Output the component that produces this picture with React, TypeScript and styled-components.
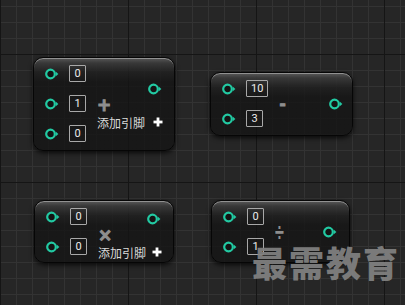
import styled, { createGlobalStyle } from 'styled-components';

const GlobalStyle = createGlobalStyle`
	html, body {
		margin: 0;
		padding: 0;
		background: #262626;
	}
`;

const Canvas = styled.div`
	position: relative;
	width: 405px;
	height: 305px;
	overflow: hidden;
	background-color: #262626;
	background-image:
		linear-gradient(to right, #151515 1px, transparent 1px),
		linear-gradient(to bottom, #151515 1px, transparent 1px),
		linear-gradient(to right, #333333 1px, transparent 1px),
		linear-gradient(to bottom, #333333 1px, transparent 1px);
	background-size: 128px 128px, 128px 128px, 16px 16px, 16px 16px;
	background-position: 0 54px, 0 54px, 0 6px, 0 6px;
	font-family: Roboto, 'Noto Sans CJK SC', sans-serif;
`;

const Node = styled.div<{ $x: number; $y: number; $w: number; $h: number }>`
	position: absolute;
	left: ${p => p.$x}px;
	top: ${p => p.$y}px;
	width: ${p => p.$w}px;
	height: ${p => p.$h}px;
	box-sizing: border-box;
	display: flex;
	border: 1px solid #060606;
	border-radius: 10px;
	background: linear-gradient(
		180deg,
		rgba(92, 92, 92, 0.95) 0px,
		rgba(58, 58, 58, 0.9) 5px,
		rgba(32, 32, 32, 0.85) 14px,
		rgba(20, 20, 20, 0.78) 24px,
		rgba(20, 20, 20, 0.78) 100%
	);
	box-shadow:
		0 2px 5px rgba(0, 0, 0, 0.75),
		inset 0 1px 0 rgba(255, 255, 255, 0.35);
`;

const Inputs = styled.div`
	display: flex;
	flex-direction: column;
	gap: 13px;
	padding: 7px 0 0 11px;
`;

const PinRow = styled.div`
	display: flex;
	align-items: center;
	gap: 10px;
	height: 17px;
`;

const ValueBox = styled.div`
	box-sizing: border-box;
	min-width: 17px;
	height: 17px;
	padding: 0 4px;
	border: 1px solid #a8a8a8;
	border-radius: 1px;
	color: #ececec;
	font-size: 11px;
	line-height: 15px;
	text-align: center;
`;

const Body = styled.div<{ $compact?: boolean; $top: number; $right: number }>`
	flex: 1;
	display: flex;
	flex-direction: ${p => (p.$compact ? 'row' : 'column')};
	align-items: ${p => (p.$compact ? 'center' : 'stretch')};
	justify-content: ${p => (p.$compact ? 'space-between' : 'flex-start')};
	padding: ${p => p.$top}px ${p => p.$right}px 0 11px;
`;

const OutPin = styled.div<{ $compact?: boolean }>`
	align-self: ${p => (p.$compact ? 'center' : 'flex-end')};
	display: flex;
	height: 12px;
	margin-right: 1px;
`;

const Op = styled.span<{ $size: number; $compact?: boolean; $narrow?: boolean }>`
	display: block;
	height: 12px;
	margin-top: ${p => (p.$compact ? 0 : 4)}px;
	color: #8e8e8e;
	font-family: ${p => (p.$narrow ? "'Liberation Sans'" : "'DejaVu Sans'")}, sans-serif;
	font-weight: bold;
	font-size: ${p => p.$size}px;
	line-height: 12px;
	-webkit-text-stroke: ${p => (p.$narrow ? 0 : 1)}px #8e8e8e;
	transform: ${p => (p.$narrow ? 'scaleX(0.62)' : 'none')};
	transform-origin: left center;
`;

const AddPin = styled.div`
	display: flex;
	align-items: center;
	justify-content: space-between;
	height: 12px;
	margin-top: 5px;
	color: #dadada;
	font-size: 12px;
	font-family: 'Noto Sans CJK SC', sans-serif;
`;

const Watermark = styled.div`
	position: absolute;
	left: 252px;
	top: 244px;
	color: rgba(128, 128, 128, 0.95);
	font-family: 'Noto Sans CJK SC', sans-serif;
	font-weight: 900;
	font-size: 35px;
	line-height: 1;
	letter-spacing: 2px;
	white-space: nowrap;
`;

const Pin = () => (
	<svg width='14' height='12' viewBox='0 0 14 12'>
		<circle cx='5.5' cy='6' r='4.3' fill='#141414' stroke='#22c9a2' strokeWidth='2.2' />
		<polygon points='10.6,3.6 13.4,6 10.6,8.4' fill='#22c9a2' />
	</svg>
);

const PlusIcon = () => (
	<svg width='10' height='10' viewBox='0 0 10 10'>
		<rect x='3.6' y='0.5' width='2.8' height='9' fill='#ffffff' />
		<rect x='0.5' y='3.6' width='9' height='2.8' fill='#ffffff' />
	</svg>
);

type MathNode = {
	x: number;
	y: number;
	w: number;
	h: number;
	values: string[];
	op: string;
	opSize: number;
	narrow?: boolean;
	addPin?: boolean;
	top: number;
	right: number;
};

const nodes: MathNode[] = [
	{ x: 33, y: 57, w: 142, h: 94, values: ['0', '1', '0'], op: '+', opSize: 17, addPin: true, top: 25, right: 11 },
	{ x: 210, y: 72, w: 143, h: 64, values: ['10', '3'], op: '-', opSize: 15, top: 0, right: 8 },
	{ x: 34, y: 200, w: 140, h: 63, values: ['0', '0'], op: '×', opSize: 17, addPin: true, top: 12, right: 11 },
	{ x: 211, y: 200, w: 139, h: 63, values: ['0', '1'], op: '÷', opSize: 26, narrow: true, top: 0, right: 11 },
];

const App = () => (
	<>
		<GlobalStyle />
		<Canvas>
			{nodes.map(node => (
				<Node key={node.x + '-' + node.y} $x={node.x} $y={node.y} $w={node.w} $h={node.h}>
					<Inputs>
						{node.values.map((value, i) => (
							<PinRow key={i}>
								<Pin />
								<ValueBox>{value}</ValueBox>
							</PinRow>
						))}
					</Inputs>
					{node.addPin ? (
						<Body $top={node.top} $right={node.right}>
							<OutPin>
								<Pin />
							</OutPin>
							<Op $size={node.opSize}>{node.op}</Op>
							<AddPin>
								添加引脚
								<PlusIcon />
							</AddPin>
						</Body>
					) : (
						<Body $compact $top={node.top} $right={node.right}>
							<Op $compact $narrow={node.narrow} $size={node.opSize}>
								{node.op}
							</Op>
							<OutPin $compact>
								<Pin />
							</OutPin>
						</Body>
					)}
				</Node>
			))}
			<Watermark>最需教育</Watermark>
		</Canvas>
	</>
);

export default App;
